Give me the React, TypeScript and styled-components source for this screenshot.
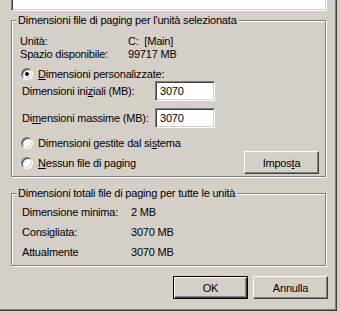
import React from "react";
import styled, { createGlobalStyle } from "styled-components";

const GlobalStyle = createGlobalStyle`
  html, body {
    margin: 0;
    padding: 0;
    background: #d4d0c8;
  }
  body {
    font-family: "Liberation Sans", Arial, sans-serif;
    font-size: 11px;
    letter-spacing: -0.2px;
    color: #000;
  }
`;

const Screen = styled.div`
  width: 340px;
  height: 314px;
  overflow: hidden;
  background: #d4d0c8;
`;

const Window = styled.div`
  width: 337px;
  height: 311px;
  box-sizing: border-box;
  border-right: 1px solid #404040;
  border-bottom: 1px solid #404040;
  box-shadow: inset -1px -1px 0 #808080;
  padding-left: 11px;
  display: flex;
  flex-direction: column;
`;

const ListBox = styled.div`
  width: 316px;
  height: 11px;
  box-sizing: border-box;
  background: #fff;
  border-style: solid;
  border-width: 0 1px 1px 1px;
  border-color: #808080 #fff #fff #808080;
  box-shadow: inset 1px 0 0 #404040, inset -1px -1px 0 #d4d0c8;
`;

const Group = styled.fieldset<{ $top: number }>`
  margin: ${(p) => p.$top}px 0 0 0;
  width: 315px;
  min-width: 0;
  box-sizing: border-box;
  padding: 0;
  border: 1px solid #808080;
  box-shadow: 1px 1px 0 #fff, inset 1px 1px 0 #fff;
`;

const Legend = styled.legend`
  margin-left: 4px;
  padding: 0 2px;
  line-height: 13px;
  background: #d4d0c8;
`;

const Body = styled.div<{ $pad: string }>`
  padding: ${(p) => p.$pad};
  display: flex;
  flex-direction: column;
`;

const InfoGrid = styled.div<{ $col: number; $row: number }>`
  display: grid;
  grid-template-columns: ${(p) => p.$col}px auto;
  grid-auto-rows: ${(p) => p.$row}px;
  align-items: center;
  white-space: pre;
`;

const RadioRow = styled.label<{ $top: number }>`
  display: flex;
  align-items: center;
  gap: 5px;
  height: 13px;
  margin-top: ${(p) => p.$top}px;
  padding-left: 1px;
`;

const RadioDot = styled.span<{ $checked?: boolean }>`
  position: relative;
  width: 12px;
  height: 12px;
  box-sizing: border-box;
  border-radius: 50%;
  background: #fff;
  border: 1px solid;
  border-color: #808080 #fff #fff #808080;
  box-shadow: inset 1px 1px 0 #404040, inset -1px -1px 0 #d4d0c8;
  &::after {
    content: "";
    display: ${(p) => (p.$checked ? "block" : "none")};
    position: absolute;
    left: 3px;
    top: 3px;
    width: 4px;
    height: 4px;
    border-radius: 50%;
    background: #000;
  }
`;

const SizeRow = styled.div<{ $top: number }>`
  display: grid;
  grid-template-columns: 133px 60px;
  align-items: center;
  margin-top: ${(p) => p.$top}px;
  padding-left: 2px;
`;

const TextField = styled.div`
  height: 20px;
  box-sizing: border-box;
  background: #fff;
  border: 1px solid;
  border-color: #808080 #fff #fff #808080;
  box-shadow: inset 1px 1px 0 #404040, inset -1px -1px 0 #d4d0c8;
  padding-left: 4px;
  line-height: 18px;
`;

const LastRow = styled.div`
  display: flex;
  align-items: center;
  justify-content: space-between;
  margin-top: 2px;
`;

const Button = styled.button<{ $default?: boolean }>`
  width: 75px;
  height: 23px;
  box-sizing: border-box;
  padding: 0;
  font: inherit;
  letter-spacing: inherit;
  color: #000;
  background: #d4d0c8;
  border: 1px solid;
  border-color: ${(p) => (p.$default ? "#000" : "#fff #404040 #404040 #fff")};
  box-shadow: ${(p) =>
    p.$default
      ? "inset 1px 1px 0 #fff, inset -1px -1px 0 #404040, inset -2px -2px 0 #808080"
      : "inset -1px -1px 0 #808080, inset 1px 1px 0 #d4d0c8"};
`;

const ButtonBar = styled.div`
  display: flex;
  justify-content: flex-end;
  gap: 5px;
  width: 317px;
  margin-top: 10px;
`;

const Key = styled.u`
  text-decoration-thickness: 1px;
  text-underline-offset: 1px;
`;

export default function App() {
  return (
    <>
      <GlobalStyle />
      <Screen>
        <Window>
          <ListBox />

          <Group $top={3}>
            <Legend>Dimensioni file di paging per l'unità selezionata</Legend>
            <Body $pad="7px 6px 2px 8px">
              <InfoGrid $col={108} $row={13}>
                <span>Unità:</span>
                <span>C:  [Main]</span>
                <span>Spazio disponibile:</span>
                <span>99717 MB</span>
              </InfoGrid>

              <RadioRow $top={7}>
                <RadioDot $checked />
                <span>
                  <Key>D</Key>imensioni personalizzate:
                </span>
              </RadioRow>

              <SizeRow $top={1}>
                <span>
                  Dimensioni ini<Key>z</Key>iali (MB):
                </span>
                <TextField>3070</TextField>
              </SizeRow>
              <SizeRow $top={7}>
                <span>
                  Di<Key>m</Key>ensioni massime (MB):
                </span>
                <TextField>3070</TextField>
              </SizeRow>

              <RadioRow $top={8}>
                <RadioDot />
                <span>
                  Dimensioni gestite dal si<Key>s</Key>tema
                </span>
              </RadioRow>

              <LastRow>
                <RadioRow $top={0}>
                  <RadioDot />
                  <span>
                    <Key>N</Key>essun file di paging
                  </span>
                </RadioRow>
                <Button>
                  Impos<Key>t</Key>a
                </Button>
              </LastRow>
            </Body>
          </Group>

          <Group $top={10}>
            <Legend>Dimensioni totali file di paging per tutte le unità</Legend>
            <Body $pad="2px 6px 3px 10px">
              <InfoGrid $col={109} $row={20}>
                <span>Dimensione minima:</span>
                <span>2 MB</span>
                <span>Consigliata:</span>
                <span>3070 MB</span>
                <span>Attualmente</span>
                <span>3070 MB</span>
              </InfoGrid>
            </Body>
          </Group>

          <ButtonBar>
            <Button $default>OK</Button>
            <Button>Annulla</Button>
          </ButtonBar>
        </Window>
      </Screen>
    </>
  );
}
